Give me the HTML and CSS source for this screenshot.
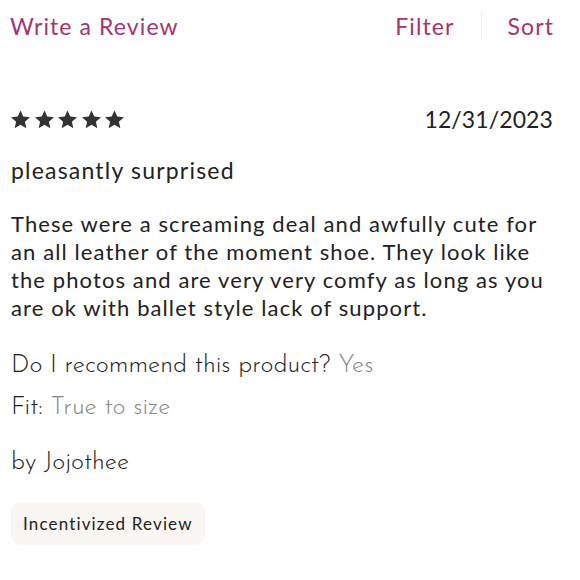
FILE: index.html
```html
<!DOCTYPE html>
<html>
<head>
<meta charset="utf-8">
<link rel="stylesheet" href="styles.css">
</head>
<body>
<div class="page">
  <header class="top">
    <span class="link">Write a Review</span>
    <div class="actions">
      <span class="link">Filter</span>
      <span class="divider"></span>
      <span class="link">Sort</span>
    </div>
  </header>
  <div class="meta">
    <div class="stars">
      <svg viewBox="0 0 24 24"><path d="M12 2.5l2.9 6.4 7 .7-5.3 4.7 1.5 6.9L12 17.6l-6.1 3.6 1.5-6.9L2.1 9.6l7-.7z"/></svg>
      <svg viewBox="0 0 24 24"><path d="M12 2.5l2.9 6.4 7 .7-5.3 4.7 1.5 6.9L12 17.6l-6.1 3.6 1.5-6.9L2.1 9.6l7-.7z"/></svg>
      <svg viewBox="0 0 24 24"><path d="M12 2.5l2.9 6.4 7 .7-5.3 4.7 1.5 6.9L12 17.6l-6.1 3.6 1.5-6.9L2.1 9.6l7-.7z"/></svg>
      <svg viewBox="0 0 24 24"><path d="M12 2.5l2.9 6.4 7 .7-5.3 4.7 1.5 6.9L12 17.6l-6.1 3.6 1.5-6.9L2.1 9.6l7-.7z"/></svg>
      <svg viewBox="0 0 24 24"><path d="M12 2.5l2.9 6.4 7 .7-5.3 4.7 1.5 6.9L12 17.6l-6.1 3.6 1.5-6.9L2.1 9.6l7-.7z"/></svg>
    </div>
    <span class="date">12/31/2023</span>
  </div>
  <h2 class="title">pleasantly surprised</h2>
  <p class="body">These were a screaming deal and awfully cute for an all leather of the moment shoe. They look like the photos and are very very comfy as long as you are ok with ballet style lack of support.</p>
  <p class="row">Do I recommend this product? <span class="val">Yes</span></p>
  <p class="row fit">Fit: <span class="val">True to size</span></p>
  <p class="row by">by Jojothee</p>
  <span class="badge">Incentivized Review</span>
</div>
</body>
</html>
```
FILE: styles.css
```css
html, body { margin: 0; padding: 0; background: #fff; }
.page {
  font-family: Lato, "Liberation Sans", sans-serif;
  color: #222;
  padding: 0 27px 0 11px;
  display: flex;
  flex-direction: column;
  align-items: flex-start;
}
.top {
  align-self: stretch;
  display: flex;
  justify-content: space-between;
  align-items: center;
  height: 52px;
  margin-left: -1px;
}
.link { color: #a8336f; font-size: 23px; letter-spacing: 1.1px; line-height: 28px; }
.actions { display: flex; align-items: center; gap: 26px; margin-right: -1px; }
.divider { width: 1px; height: 30px; background: #f0f0f0; }
.meta {
  align-self: stretch;
  display: flex;
  justify-content: space-between;
  align-items: center;
  margin-top: 51px;
  height: 32px;
}
.stars { display: flex; gap: 0.5px; margin-left: -2px; }
.stars svg { width: 23px; height: 23px; fill: #333; }
.date { font-size: 23px; color: #222; letter-spacing: 0.1px; }
.title { font-size: 23px; letter-spacing: 1.2px; font-weight: 400; margin: 21px 0 0; line-height: 28px; }
.body { font-size: 22px; letter-spacing: 1.1px; line-height: 28px; margin: 26px 0 0; }
.row { font-family: "Josefin Sans", Lato, sans-serif; font-weight: 300; font-size: 25px; margin: 0; line-height: 30px; }
.body + .row { margin-top: 29px; }
.fit { margin-top: 12px; }
.by { margin-top: 25px; }
.val { color: #888; }
.badge {
  margin-top: 24px;
  background: #faf6f3;
  border-radius: 10px;
  padding: 10px 12px;
  font-size: 17px;
  letter-spacing: 1.15px;
  line-height: 23px;
}
```
